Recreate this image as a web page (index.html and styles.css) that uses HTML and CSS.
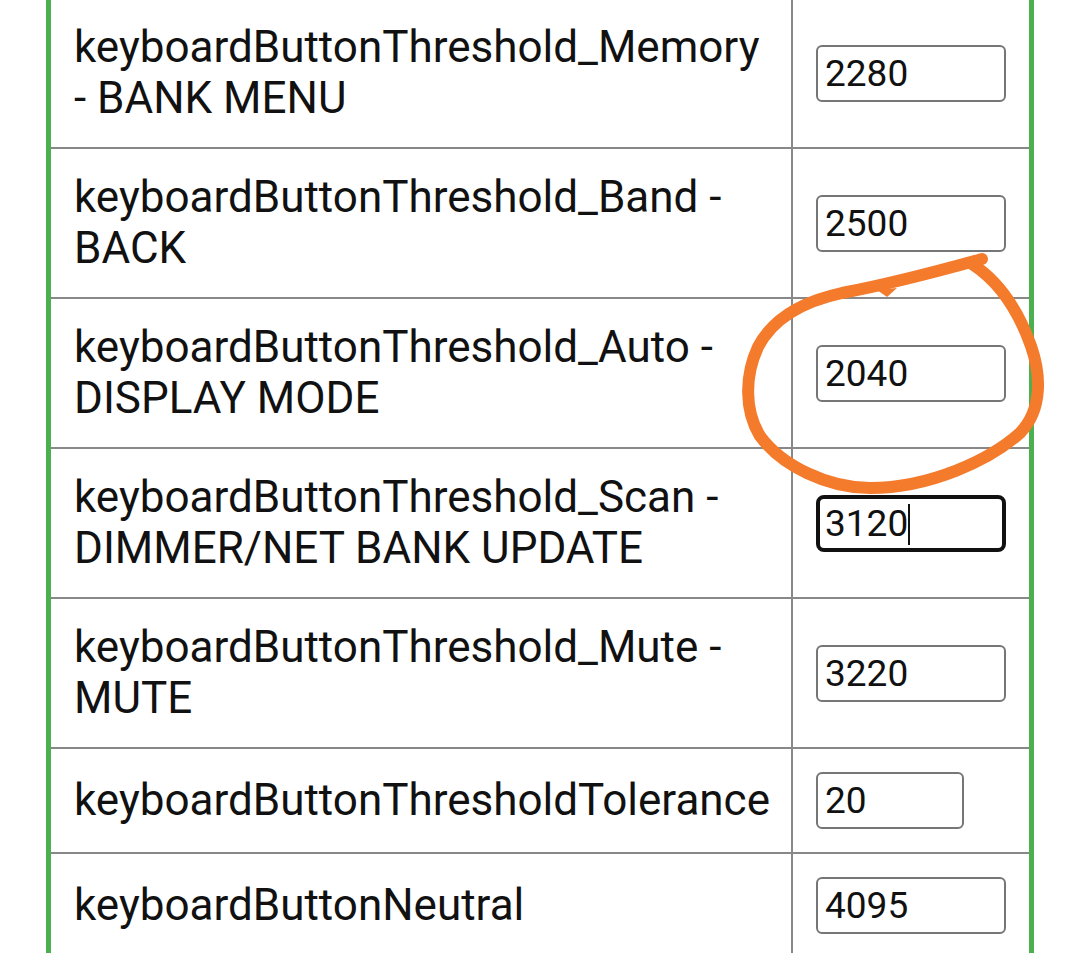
FILE: index.html
```html
<!DOCTYPE html>
<html lang="en">

<head>
    <meta charset="UTF-8">
    <meta name="viewport" content="width=device-width, initial-scale=1.0">
    <title>Keyboard Settings</title>
    <link rel="stylesheet" href="styles.css">
</head>

<body>
    <form class="settings">
        <table class="config-table">
            <tr>
                <td class="label">keyboardButtonThreshold_Memory - BANK MENU</td>
                <td class="value"><input class="num" type="text" name="kbMemory" value="2280"></td>
            </tr>
            <tr>
                <td class="label">keyboardButtonThreshold_Band - BACK</td>
                <td class="value"><input class="num" type="text" name="kbBand" value="2500"></td>
            </tr>
            <tr>
                <td class="label">keyboardButtonThreshold_Auto - DISPLAY MODE</td>
                <td class="value"><input class="num" type="text" name="kbAuto" value="2040"></td>
            </tr>
            <tr>
                <td class="label">keyboardButtonThreshold_Scan - DIMMER/NET BANK UPDATE</td>
                <td class="value">
                    <div class="field">
                        <input class="num editing" type="text" name="kbScan" value="3120">
                        <span class="caret"></span>
                    </div>
                </td>
            </tr>
            <tr>
                <td class="label">keyboardButtonThreshold_Mute - MUTE</td>
                <td class="value"><input class="num" type="text" name="kbMute" value="3220"></td>
            </tr>
            <tr>
                <td class="label">keyboardButtonThresholdTolerance</td>
                <td class="value"><input class="num short" type="text" name="kbTolerance" value="20"></td>
            </tr>
            <tr>
                <td class="label">keyboardButtonNeutral</td>
                <td class="value"><input class="num" type="text" name="kbNeutral" value="4095"></td>
            </tr>
        </table>
    </form>

    <!-- hand-drawn highlight from the screenshot -->
    <svg class="scribble" width="1080" height="953" viewBox="0 0 1080 953">
        <path d="M982 259 C 935 272, 890 284, 842 293 C 800 302, 772 320, 758 347 C 745 375, 744 410, 760 436 C 782 466, 828 488, 870 488 C 930 488, 990 460, 1020 433 C 1044 408, 1040 372, 1031 346 C 1017 307, 997 280, 972 264"
            fill="none" stroke="#f47a2c" stroke-width="12" stroke-linecap="round" stroke-linejoin="round" />
        <path d="M877 290 L 887 297 L 897 288 Z" fill="#f47a2c" />
    </svg>
</body>

</html>
```

FILE: styles.css
```css
body {
    font-family: Roboto, "Noto Sans", Arial, sans-serif;
    margin: 0;
    background: #fff;
    color: #111;
}

.settings {
    margin: -1px 46px 0;
}

.config-table {
    box-sizing: border-box;
    width: 988px;
    table-layout: fixed;
    border-collapse: separate;
    border-spacing: 0;
    border-left: 5px solid #4caf50;
    border-right: 5px solid #4caf50;
}

.config-table td {
    box-sizing: border-box;
    padding: 23px;
    border-bottom: 2px solid #888;
    font-size: 44px;
    line-height: 51px;
    vertical-align: middle;
}

.label {
    border-right: 2px solid #888;
}

.value {
    width: 236px;
}

.num {
    display: block;
    box-sizing: border-box;
    width: 190px;
    height: 57px;
    margin: 0;
    padding: 0 7px;
    border: 2px solid #767676;
    border-radius: 6px;
    background: #fff;
    color: #111;
    font-family: Roboto, "Noto Sans", Arial, sans-serif;
    font-size: 37px;
}

.num.short {
    width: 148px;
}

.num.editing {
    border: 4px solid #111;
    border-radius: 8px;
    padding: 0 5px;
}

.field {
    position: relative;
}

.caret {
    position: absolute;
    left: 92px;
    top: 9px;
    width: 2px;
    height: 41px;
    background: #111;
}

.scribble {
    position: absolute;
    top: 0;
    left: 0;
    pointer-events: none;
}
```
